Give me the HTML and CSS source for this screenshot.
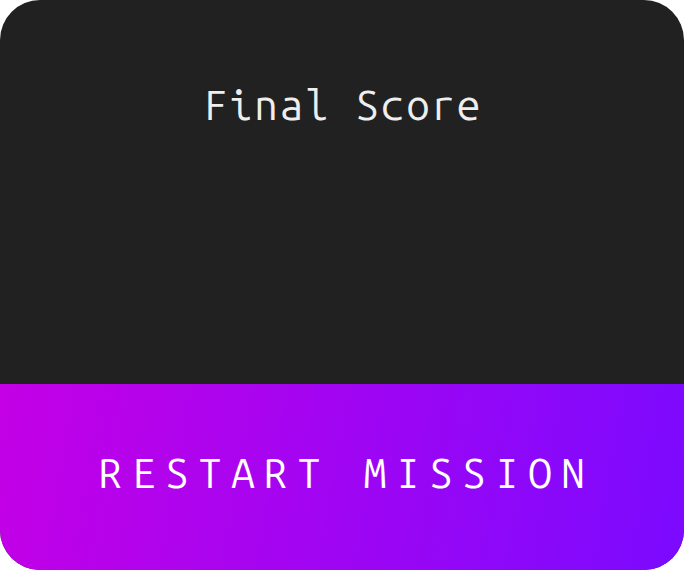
FILE: index.html
```html
<!DOCTYPE html>
<html>
<head>
<meta charset="utf-8">
<link rel="stylesheet" href="styles.css">
</head>
<body>
<div class="card">
  <div class="top">
    <div class="title">Final Score</div>
    <div class="score"></div>
  </div>
  <button class="restart">RESTART MISSION</button>
</div>
</body>
</html>
```
FILE: styles.css
```css
html, body {
  margin: 0;
  padding: 0;
  background: #ffffff;
}
.card {
  width: 684px;
  height: 570px;
  border-radius: 40px;
  overflow: hidden;
  background: #212121;
  display: flex;
  flex-direction: column;
  font-family: "Ubuntu Mono", "DejaVu Sans Mono", monospace;
}
.top {
  height: 384px;
  flex-shrink: 0;
  display: flex;
  flex-direction: column;
  align-items: center;
  padding-top: 80px;
  box-sizing: border-box;
}
.title {
  color: #eeeeee;
  font-size: 42px;
  letter-spacing: 1.8px;
  line-height: 50px;
  padding-left: 1.8px;
}
.restart {
  flex: 1;
  border: none;
  margin: 0;
  padding: 0 0 8px 9.5px;
  background: linear-gradient(100deg, #c400e6 0%, #7b0aff 100%);
  color: #ffffff;
  font-family: "Ubuntu Mono", "DejaVu Sans Mono", monospace;
  font-size: 42px;
  line-height: 50px;
  letter-spacing: 9.5px;
  text-align: center;
}
```
